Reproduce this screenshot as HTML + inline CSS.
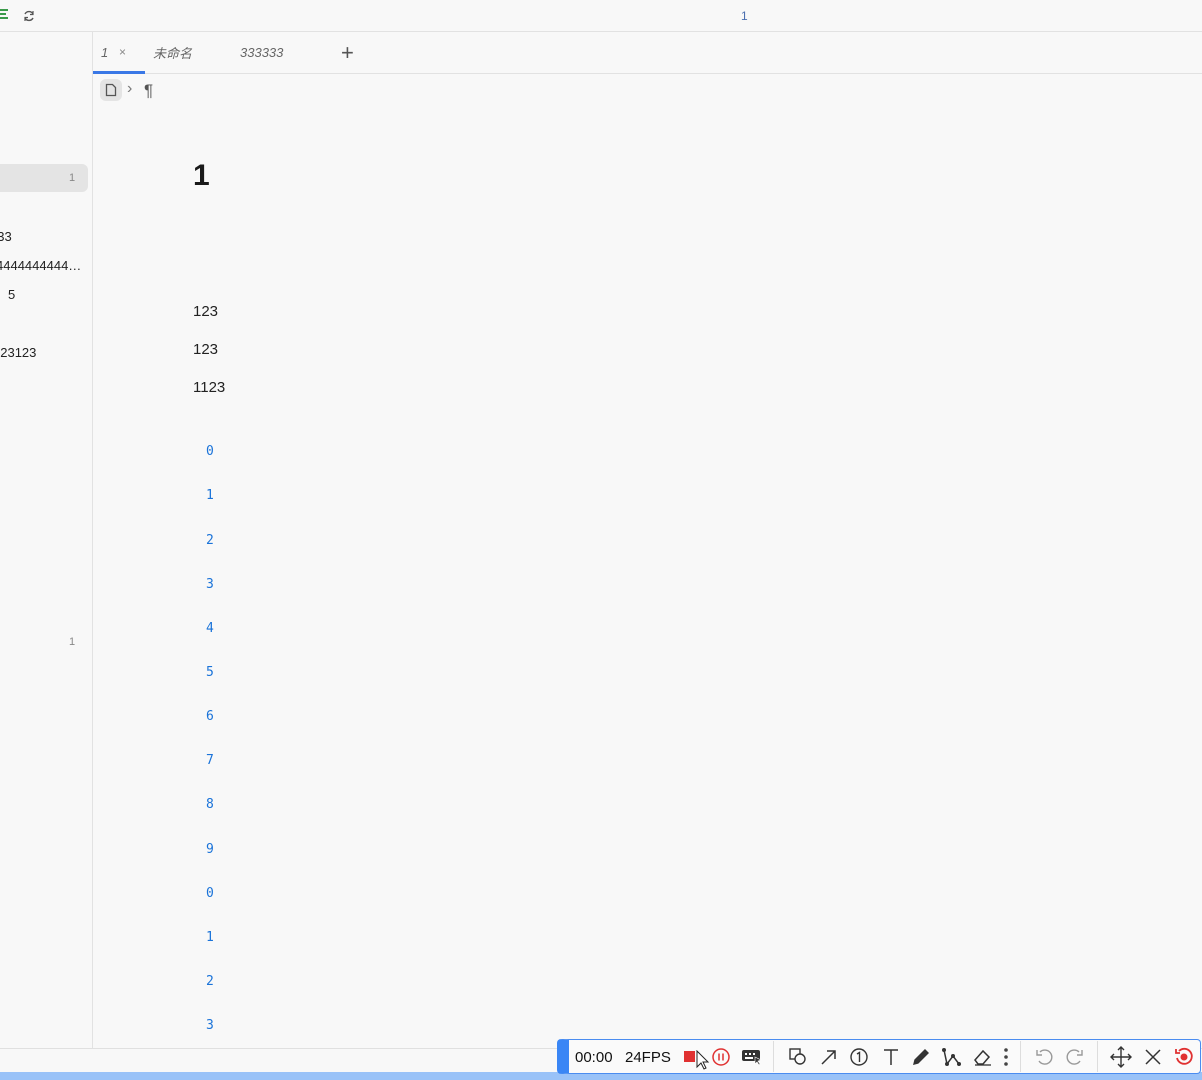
<!DOCTYPE html>
<html><head><meta charset="utf-8">
<style>
*{margin:0;padding:0;box-sizing:border-box}
body{width:1202px;height:1080px;background:#f8f8f8;font-family:"Liberation Sans","Noto Sans CJK SC",sans-serif;position:relative;overflow:hidden;color:#222}
.a{position:absolute}
.num{position:absolute;left:206px;font-family:"DejaVu Sans Mono","Liberation Mono",monospace;font-size:13px;color:#1a73d9}
.t{position:absolute;font-size:15px;color:#222}
svg{position:absolute}
</style></head><body>
<div class="a" style="left:0;top:31px;width:1202px;height:1px;background:#e2e2e2"></div>
<svg style="left:0;top:8px" width="10" height="14"><g fill="#3a9a4a"><rect x="0" y="1" width="8" height="2"/><rect x="0" y="5" width="6" height="2"/><rect x="0" y="9" width="8" height="2"/></g></svg>
<svg style="left:22px;top:9px" width="14" height="14" viewBox="0 0 14 14"><path d="M11 5A4.5 4.5 0 0 0 3 5M3 9a4.5 4.5 0 0 0 8 0" fill="none" stroke="#555" stroke-width="1.4"/><path d="M11 2v3.5H8M3 12V8.5h3" fill="none" stroke="#555" stroke-width="1.2"/></svg>
<div class="a" style="left:741px;top:9px;font-size:12px;color:#4a6fb0">1</div>
<div class="a" style="left:92px;top:32px;width:1px;height:1016px;background:#e2e2e2"></div>
<div class="a" style="left:93px;top:73px;width:1109px;height:1px;background:#e2e2e2"></div>
<div class="a" style="left:93px;top:71px;width:52px;height:3px;background:#3a78e6"></div>
<div class="a" style="left:101px;top:45px;font-size:13px;font-style:italic;color:#666">1</div>
<div class="a" style="left:119px;top:45px;font-size:12px;color:#888">×</div>
<div class="a" style="left:153px;top:43px;font-size:13px;font-style:italic;color:#666">未命名</div>
<div class="a" style="left:240px;top:45px;font-size:13px;font-style:italic;color:#666">333333</div>
<div class="a" style="left:341px;top:40px;font-size:22px;color:#555;font-weight:300">+</div>
<div class="a" style="left:100px;top:79px;width:22px;height:22px;border-radius:6px;background:#e4e4e4"></div>
<svg style="left:105px;top:83px" width="12" height="14" viewBox="0 0 12 14"><path d="M1.5 1.5h6l3 3v8h-9z" fill="none" stroke="#555" stroke-width="1.3"/></svg>
<div class="a" style="left:127px;top:80px;font-size:16px;color:#777">›</div>
<div class="a" style="left:144px;top:81px;font-size:17px;color:#555">¶</div>
<div class="a" style="left:0;top:164px;width:88px;height:28px;background:#e4e4e4;border-radius:0 6px 6px 0"></div>
<div class="a" style="left:69px;top:172px;font-size:11px;color:#888">1</div>
<div class="t" style="left:-10px;top:229px;font-size:13px">333</div>
<div class="t" style="left:-4px;top:258px;font-size:13px">4444444444…</div>
<div class="t" style="left:8px;top:287px;font-size:13px">5</div>
<div class="t" style="left:-7px;top:345px;font-size:13px">123123</div>
<div class="a" style="left:69px;top:636px;font-size:11px;color:#888">1</div>
<div class="a" style="left:193px;top:159px;font-size:30px;font-weight:bold;color:#1a1a1a">1</div>
<div class="t" style="left:193px;top:303px">123</div>
<div class="t" style="left:193px;top:341px">123</div>
<div class="t" style="left:193px;top:379px">1123</div>
<div class="num" style="top:444px">0</div>
<div class="num" style="top:488px">1</div>
<div class="num" style="top:533px">2</div>
<div class="num" style="top:577px">3</div>
<div class="num" style="top:621px">4</div>
<div class="num" style="top:665px">5</div>
<div class="num" style="top:709px">6</div>
<div class="num" style="top:753px">7</div>
<div class="num" style="top:797px">8</div>
<div class="num" style="top:842px">9</div>
<div class="num" style="top:886px">0</div>
<div class="num" style="top:930px">1</div>
<div class="num" style="top:974px">2</div>
<div class="num" style="top:1018px">3</div>
<div class="a" style="left:0;top:1048px;width:1202px;height:1px;background:#e0e0e0"></div>
<div class="a" style="left:0;top:1072px;width:1202px;height:8px;background:#99c2f8"></div>
<div class="a" style="left:557px;top:1039px;width:644px;height:35px;border:1px solid #4a8cf0;border-radius:4px;background:#fafafa;border-left:12px solid #3a86f5"></div>
<div class="a" style="left:575px;top:1049px;font-size:15px;color:#111">00:00</div>
<div class="a" style="left:625px;top:1049px;font-size:15px;color:#111">24FPS</div>
<div class="a" style="left:684px;top:1051px;width:11px;height:11px;background:#e03131"></div>
<svg style="left:696px;top:1050px" width="14" height="22" viewBox="0 0 14 22"><path d="M1 1v16l4-4 3 6 2-1-3-6h5z" fill="#fff" stroke="#222" stroke-width="1"/></svg>
<svg style="left:711px;top:1047px" width="20" height="20"><circle cx="10" cy="10" r="8" fill="none" stroke="#e03131" stroke-width="1.5"/><path d="M8 6.5v7M12 6.5v7" stroke="#e03131" stroke-width="1.5"/></svg>
<svg style="left:741px;top:1049px" width="22" height="17"><rect x="1" y="1" width="18" height="11" rx="2" fill="#333"/><g fill="#fff"><rect x="4" y="4" width="2" height="2"/><rect x="8" y="4" width="2" height="2"/><rect x="12" y="4" width="2" height="2"/><rect x="4" y="8" width="8" height="2"/></g><path d="M14 8l6 3-3 1 2 3-1 1-2-3-2 2z" fill="#333" stroke="#fff" stroke-width=".6"/></svg>
<div class="a" style="left:773px;top:1041px;width:1px;height:31px;background:#ddd"></div>
<svg style="left:788px;top:1047px" width="20" height="20"><rect x="2" y="2" width="10" height="10" fill="none" stroke="#333" stroke-width="1.4"/><circle cx="12" cy="12" r="5" fill="#fafafa" stroke="#333" stroke-width="1.4"/></svg>
<svg style="left:819px;top:1047px" width="20" height="20"><path d="M3 17L16 4M8 4h8v8" fill="none" stroke="#333" stroke-width="1.5"/></svg>
<svg style="left:849px;top:1047px" width="20" height="20"><circle cx="10" cy="10" r="8" fill="none" stroke="#333" stroke-width="1.4"/><path d="M8 7l2.5-1.5V15" fill="none" stroke="#333" stroke-width="1.4"/></svg>
<svg style="left:881px;top:1047px" width="20" height="20"><path d="M3 3h14M10 3v15" stroke="#333" stroke-width="1.5"/></svg>
<svg style="left:911px;top:1047px" width="20" height="20"><path d="M3 17l1-4L14 3l3 3L7 16z" fill="#333" stroke="#333" stroke-width="1.4"/></svg>
<svg style="left:941px;top:1047px" width="22" height="20"><path d="M3 3l3 14 6-8 6 8" fill="none" stroke="#333" stroke-width="1.5"/><circle cx="3" cy="3" r="2" fill="#333"/><circle cx="6" cy="17" r="2" fill="#333"/><circle cx="12" cy="9" r="2" fill="#333"/><circle cx="18" cy="17" r="2" fill="#333"/></svg>
<svg style="left:972px;top:1047px" width="22" height="20"><path d="M3 13l8-9 6 6-6 7H6z" fill="none" stroke="#333" stroke-width="1.5"/><path d="M3 18h16" stroke="#333" stroke-width="1.3"/></svg>
<svg style="left:1002px;top:1047px" width="8" height="20"><circle cx="4" cy="3" r="1.8" fill="#444"/><circle cx="4" cy="10" r="1.8" fill="#444"/><circle cx="4" cy="17" r="1.8" fill="#444"/></svg>
<div class="a" style="left:1020px;top:1041px;width:1px;height:31px;background:#ddd"></div>
<svg style="left:1034px;top:1047px" width="20" height="20"><path d="M6 5A7 7 0 1 1 5 14" fill="none" stroke="#999" stroke-width="1.4"/><path d="M3 3v5h5" fill="none" stroke="#999" stroke-width="1.4"/></svg>
<svg style="left:1065px;top:1047px" width="20" height="20"><path d="M14 5A7 7 0 1 0 15 14" fill="none" stroke="#999" stroke-width="1.4"/><path d="M17 3v5h-5" fill="none" stroke="#999" stroke-width="1.4"/></svg>
<div class="a" style="left:1097px;top:1041px;width:1px;height:31px;background:#ddd"></div>
<svg style="left:1110px;top:1046px" width="22" height="22"><path d="M11 1v20M1 11h20M8 4l3-3 3 3M8 18l3 3 3-3M4 8l-3 3 3 3M18 8l3 3-3 3" fill="none" stroke="#333" stroke-width="1.4"/></svg>
<svg style="left:1144px;top:1048px" width="18" height="18"><path d="M2 2l14 14M16 2L2 16" stroke="#333" stroke-width="1.5"/></svg>
<svg style="left:1173px;top:1046px" width="22" height="22"><path d="M6 5A7.5 7.5 0 1 1 4 12" fill="none" stroke="#e03131" stroke-width="1.8"/><path d="M3 3v4h4" fill="none" stroke="#e03131" stroke-width="1.8"/><circle cx="11" cy="11" r="3.5" fill="#e03131"/></svg>
</body></html>
